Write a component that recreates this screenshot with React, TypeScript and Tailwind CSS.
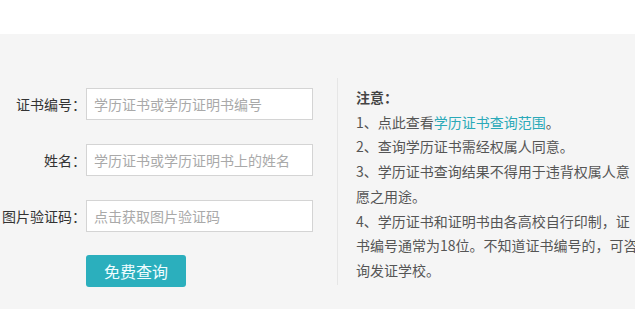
import React from "react";

const FONT = "font-['Microsoft_YaHei','Noto_Sans_CJK_SC',sans-serif]";

type FieldProps = {
    label: string;
    placeholder: string;
};

const Field: React.FC<FieldProps> = ({label, placeholder}) => (
    <div className="flex items-center">
        <label className="w-[86px] text-right text-[14px] text-[#333]">{label}</label>
        <input
            className="w-[227px] h-[32px] border border-[#d4d4d4] bg-white px-[7px] text-[14px] text-[#333] placeholder:text-[#a9a9a9] outline-none"
            placeholder={placeholder}
        />
    </div>
);

export default function App() {
    return (
        <div className={`w-[635px] h-[309px] overflow-hidden ${FONT}`}>
            <div className="h-[34px] bg-white"></div>
            <div className="h-[275px] bg-[#f5f5f5] flex pt-[54px]">
                {/* form */}
                <div className="flex flex-col gap-[24px] w-[313px] shrink-0">
                    <Field label="证书编号：" placeholder="学历证书或学历证明书编号" />
                    <Field label="姓名：" placeholder="学历证书或学历证明书上的姓名" />
                    <Field label="图片验证码：" placeholder="点击获取图片验证码" />
                    <div className="pl-[86px] -mt-px">
                        <button className="w-[100px] h-[32px] rounded-[3px] bg-[#2bafbd] text-[16px] text-[#f0fdff]">
                            免费查询
                        </button>
                    </div>
                </div>

                {/* notes */}
                <div className="ml-[24px] -mt-[10px] mb-[24px] border-l border-[#e6e6e6] pl-[18px] pt-[7px] shrink-0">
                    <div className="w-[285px] text-[14px] leading-[24.7px] text-[#555]">
                        <p className="font-bold text-[#444]">注意：</p>
                        <p>1、点此查看<a className="text-[#2aa9b8]">学历证书查询范围</a>。</p>
                        <p>2、查询学历证书需经权属人同意。</p>
                        <p>3、学历证书查询结果不得用于违背权属人意<br />愿之用途。</p>
                        <p>4、学历证书和证明书由各高校自行印制，证<br />书编号通常为18位。不知道证书编号的，可咨<br />询发证学校。</p>
                    </div>
                </div>
            </div>
        </div>
    );
}
